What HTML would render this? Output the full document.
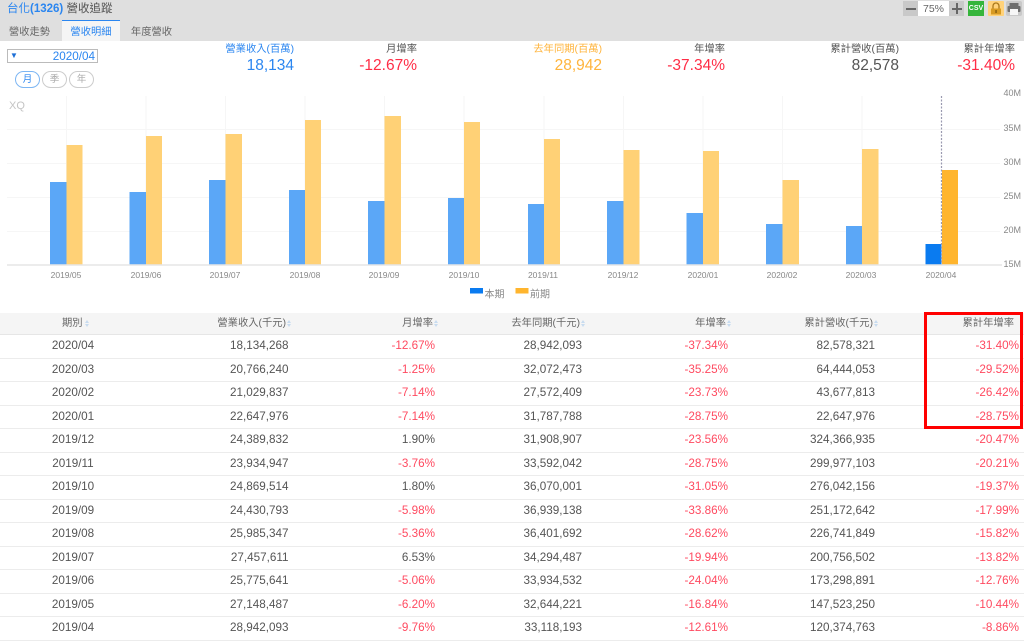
<!DOCTYPE html>
<html lang="zh-Hant"><head><meta charset="utf-8"><title>台化 營收追蹤</title>
<style>
html,body{margin:0;padding:0;background:#fff}
body{position:relative;width:1024px;height:633px;overflow:hidden;font-family:"Liberation Sans","Noto Sans CJK TC",sans-serif;color:#555;filter:blur(.3px)}
.a{position:absolute;white-space:nowrap}
#top{left:0;top:0;width:1024px;height:41px;background:#dfdfdf}
.tab{top:20px;height:21px;line-height:25px;font-size:10.3px;text-align:center;color:#666}
.lab{top:43px;font-size:10.3px;line-height:14px;text-align:right}
.val{top:57px;font-size:15.5px;line-height:18px;text-align:right}
.red{color:#ff2d46}.blue{color:#2b86f0}.org{color:#ffb43c}
.pill{top:71px;width:23px;height:15px;border:1px solid #ccc;border-radius:9px;font-size:9.5px;line-height:16px;text-align:center;color:#aaa;background:#fff}
.row{position:absolute;left:0;width:1024px;height:23.5px;border-bottom:1.5px solid #ececec;box-sizing:border-box;font-size:11.7px;line-height:22px;color:#555}
.row span{position:absolute;top:0;white-space:nowrap}
.c1{left:0;width:146px;text-align:center}
.c2{right:735.5px}.c3{right:589px}.c4{right:442px}.c5{right:296px}.c6{right:149px}.c7{right:5px}
.row .r{color:#ff4a60}
.hd{position:absolute;left:0;top:313px;width:1024px;height:22px;background:#f5f5f5;border-bottom:1px solid #e6e6e6;box-sizing:border-box}
.hd span{position:absolute;top:4px;font-size:10.3px;line-height:14px;color:#666;white-space:nowrap}
.hd i{position:absolute;top:6px;width:4px;height:9px}
.hd i:before,.hd i:after{content:"";position:absolute;left:0;border-left:2px solid transparent;border-right:2px solid transparent}
.hd i:before{top:1px;border-bottom:3px solid #c8dcf0}
.hd i:after{top:5px;border-top:3px solid #c8dcf0}
.btn{top:1px;height:15px;background:#c9c9c9}
</style></head><body>
<div class="a" id="top"></div>
<div class="a" style="left:7px;top:0;font-size:11.5px;line-height:18px;color:#555"><span class="blue">台化<b style="font-weight:bold">(1326)</b></span> 營收追蹤</div>
<div class="a" style="left:62px;top:20px;width:58px;height:21px;background:#f5f5f5;border-top:1px solid #2b86f0;box-sizing:border-box"></div>
<div class="a tab" style="left:0;width:59px">營收走勢</div>
<div class="a tab" style="left:62px;width:58px;color:#2b86f0">營收明細</div>
<div class="a tab" style="left:121px;width:61px">年度營收</div>

<div class="a btn" style="left:903px;width:15px"></div>
<div class="a" style="left:906px;top:8px;width:10px;height:1.5px;background:#666"></div>
<div class="a" style="left:918px;top:1px;width:31px;height:15px;background:#fff;font-size:10.500px;line-height:17px;text-align:center;color:#666">75%</div>
<div class="a btn" style="left:949px;width:15px"></div>
<div class="a" style="left:952px;top:8px;width:10px;height:1.5px;background:#666"></div>
<div class="a" style="left:956px;top:3px;width:1.5px;height:11px;background:#666"></div>
<div class="a" style="left:968px;top:1px;width:16px;height:15px;background:#35b53b;color:#fff;font-size:7px;font-weight:bold;line-height:15px;text-align:center">CSV</div>
<svg class="a" style="left:988px;top:1px" width="36" height="16" viewBox="0 0 36 16">
<rect x="0" y="0" width="16" height="15" rx="1" fill="#ffd27a"/>
<path d="M5 7.500V5a3 3 0 0 1 6 0V7.500" fill="none" stroke="#a8781c" stroke-width="1.300"/>
<rect x="3" y="7.500" width="10" height="6" fill="#d79a22"/>
<rect x="7.300" y="9" width="1.500" height="3" fill="#8a6010"/>
<rect x="18" y="0" width="16" height="15" rx="2" fill="#c9c9c9"/>
<rect x="21.500" y="2" width="9" height="3" fill="#6e6e6e"/>
<rect x="19.500" y="5" width="13" height="6" rx="1" fill="#6e6e6e"/>
<rect x="22" y="8" width="8" height="6" fill="#f6f6f6"/>
</svg>

<div class="a" style="left:7px;top:49px;width:91px;height:14px;border:1px solid #bbb;box-sizing:border-box;background:#fff"></div>
<div class="a" style="left:10px;top:49px;font-size:8px;line-height:13px;color:#1d6fd6">▼</div>
<div class="a" style="left:40px;top:49px;width:55px;text-align:right;font-size:11.7px;line-height:15px;color:#2b86f0">2020/04</div>
<div class="a pill" style="left:15px;border-color:#7db6f3;color:#2b86f0">月</div>
<div class="a pill" style="left:42px">季</div>
<div class="a pill" style="left:69px">年</div>

<div class="a lab blue" style="right:730px">營業收入(百萬)</div><div class="a val blue" style="right:730px">18,134</div>
<div class="a lab" style="right:607px">月增率</div><div class="a val red" style="right:607px">-12.67%</div>
<div class="a lab org" style="right:422px">去年同期(百萬)</div><div class="a val org" style="right:422px">28,942</div>
<div class="a lab" style="right:299px">年增率</div><div class="a val red" style="right:299px">-37.34%</div>
<div class="a lab" style="right:125px">累計營收(百萬)</div><div class="a val" style="right:125px">82,578</div>
<div class="a lab" style="right:9px">累計年增率</div><div class="a val red" style="right:9px">-31.40%</div>

<svg class="a" style="left:0;top:88px" width="1024" height="222" viewBox="0 88 1024 222" font-family="Liberation Sans,Noto Sans CJK TC,sans-serif">
<g stroke="#f6f6f6" stroke-width="1">
<path d="M7 129.500H1000M7 163.500H1000M7 197.500H1000M7 231.500H1000"/>
<path d="M66.500 96V265M146 96V265M225.500 96V265M305 96V265M384.500 96V265M464 96V265M544 96V265M623.500 96V265M703 96V265M782.500 96V265M862 96V265"/>
</g>
<text x="9" y="109" font-size="11" fill="#c4c4c4">XQ</text>
<g fill="#5ba7f7">
<rect x="50" y="182" width="16.500" height="83"/><rect x="129.500" y="192" width="16.500" height="73"/><rect x="209" y="180" width="16.500" height="85"/><rect x="289" y="190" width="16" height="75"/><rect x="368" y="201" width="16.500" height="64"/><rect x="448" y="198" width="16" height="67"/><rect x="528" y="204" width="16" height="61"/><rect x="607" y="201" width="16.500" height="64"/><rect x="686.500" y="213" width="16.500" height="52"/><rect x="766" y="224" width="16.500" height="41"/><rect x="846" y="226" width="16" height="39"/>
<rect x="925.500" y="244" width="16" height="21" fill="#0a7bf0"/>
</g>
<g fill="#ffd176">
<rect x="66.500" y="145" width="16" height="120"/><rect x="146" y="136" width="16" height="129"/><rect x="225.500" y="134" width="16.500" height="131"/><rect x="305" y="120" width="16" height="145"/><rect x="384.500" y="116" width="16.500" height="149"/><rect x="464" y="122" width="16" height="143"/><rect x="544" y="139" width="16" height="126"/><rect x="623.500" y="150" width="16" height="115"/><rect x="703" y="151" width="16" height="114"/><rect x="782.500" y="180" width="16.500" height="85"/><rect x="862" y="149" width="16.500" height="116"/>
<rect x="942" y="170" width="16" height="95" fill="#ffb52e"/>
</g>
<path d="M941.500 96V265" stroke="#9a9ab0" stroke-width="1.200" stroke-dasharray="2 1.500"/>
<path d="M7 265H1002" stroke="#e6e6e6" stroke-width="1.500"/>
<g font-size="8.500" fill="#888" text-anchor="middle">
<text x="66" y="278">2019/05</text><text x="146" y="278">2019/06</text><text x="225" y="278">2019/07</text><text x="305" y="278">2019/08</text><text x="384" y="278">2019/09</text><text x="464" y="278">2019/10</text><text x="543" y="278">2019/11</text><text x="623" y="278">2019/12</text><text x="703" y="278">2020/01</text><text x="782" y="278">2020/02</text><text x="861" y="278">2020/03</text><text x="941" y="278">2020/04</text>
</g>
<g font-size="9" fill="#888" text-anchor="end">
<text x="1021" y="96">40M</text><text x="1021" y="131">35M</text><text x="1021" y="165">30M</text><text x="1021" y="199">25M</text><text x="1021" y="233">20M</text><text x="1021" y="267">15M</text>
</g>
<rect x="470" y="288" width="13" height="5.500" fill="#0a7bf0"/>
<text x="484.500" y="297.500" font-size="10" fill="#888">本期</text>
<rect x="515.500" y="288" width="13" height="5.500" fill="#ffb52e"/>
<text x="530" y="297.500" font-size="10" fill="#888">前期</text>
</svg>

<div class="hd">
<span style="left:62px">期別</span><i style="left:85px"></i>
<span style="right:738px">營業收入(千元)</span><i style="left:287px"></i>
<span style="right:591px">月增率</span><i style="left:434px"></i>
<span style="right:444px">去年同期(千元)</span><i style="left:581px"></i>
<span style="right:298px">年增率</span><i style="left:727px"></i>
<span style="right:151px">累計營收(千元)</span><i style="left:874px"></i>
<span style="right:10px">累計年增率</span>
</div>

<div class="row" style="top:335px"><span class="c1">2020/04</span><span class="c2">18,134,268</span><span class="c3 r">-12.67%</span><span class="c4">28,942,093</span><span class="c5 r">-37.34%</span><span class="c6">82,578,321</span><span class="c7 r">-31.40%</span></div>
<div class="row" style="top:358.500px"><span class="c1">2020/03</span><span class="c2">20,766,240</span><span class="c3 r">-1.25%</span><span class="c4">32,072,473</span><span class="c5 r">-35.25%</span><span class="c6">64,444,053</span><span class="c7 r">-29.52%</span></div>
<div class="row" style="top:382px"><span class="c1">2020/02</span><span class="c2">21,029,837</span><span class="c3 r">-7.14%</span><span class="c4">27,572,409</span><span class="c5 r">-23.73%</span><span class="c6">43,677,813</span><span class="c7 r">-26.42%</span></div>
<div class="row" style="top:405.500px"><span class="c1">2020/01</span><span class="c2">22,647,976</span><span class="c3 r">-7.14%</span><span class="c4">31,787,788</span><span class="c5 r">-28.75%</span><span class="c6">22,647,976</span><span class="c7 r">-28.75%</span></div>
<div class="row" style="top:429px"><span class="c1">2019/12</span><span class="c2">24,389,832</span><span class="c3">1.90%</span><span class="c4">31,908,907</span><span class="c5 r">-23.56%</span><span class="c6">324,366,935</span><span class="c7 r">-20.47%</span></div>
<div class="row" style="top:452.500px"><span class="c1">2019/11</span><span class="c2">23,934,947</span><span class="c3 r">-3.76%</span><span class="c4">33,592,042</span><span class="c5 r">-28.75%</span><span class="c6">299,977,103</span><span class="c7 r">-20.21%</span></div>
<div class="row" style="top:476px"><span class="c1">2019/10</span><span class="c2">24,869,514</span><span class="c3">1.80%</span><span class="c4">36,070,001</span><span class="c5 r">-31.05%</span><span class="c6">276,042,156</span><span class="c7 r">-19.37%</span></div>
<div class="row" style="top:499.500px"><span class="c1">2019/09</span><span class="c2">24,430,793</span><span class="c3 r">-5.98%</span><span class="c4">36,939,138</span><span class="c5 r">-33.86%</span><span class="c6">251,172,642</span><span class="c7 r">-17.99%</span></div>
<div class="row" style="top:523px"><span class="c1">2019/08</span><span class="c2">25,985,347</span><span class="c3 r">-5.36%</span><span class="c4">36,401,692</span><span class="c5 r">-28.62%</span><span class="c6">226,741,849</span><span class="c7 r">-15.82%</span></div>
<div class="row" style="top:546.500px"><span class="c1">2019/07</span><span class="c2">27,457,611</span><span class="c3">6.53%</span><span class="c4">34,294,487</span><span class="c5 r">-19.94%</span><span class="c6">200,756,502</span><span class="c7 r">-13.82%</span></div>
<div class="row" style="top:570px"><span class="c1">2019/06</span><span class="c2">25,775,641</span><span class="c3 r">-5.06%</span><span class="c4">33,934,532</span><span class="c5 r">-24.04%</span><span class="c6">173,298,891</span><span class="c7 r">-12.76%</span></div>
<div class="row" style="top:593.500px"><span class="c1">2019/05</span><span class="c2">27,148,487</span><span class="c3 r">-6.20%</span><span class="c4">32,644,221</span><span class="c5 r">-16.84%</span><span class="c6">147,523,250</span><span class="c7 r">-10.44%</span></div>
<div class="row" style="top:617px"><span class="c1">2019/04</span><span class="c2">28,942,093</span><span class="c3 r">-9.76%</span><span class="c4">33,118,193</span><span class="c5 r">-12.61%</span><span class="c6">120,374,763</span><span class="c7 r">-8.86%</span></div>

<div class="a" style="left:924px;top:312px;width:99px;height:117px;border:3px solid #f00;box-sizing:border-box"></div>
</body></html>
